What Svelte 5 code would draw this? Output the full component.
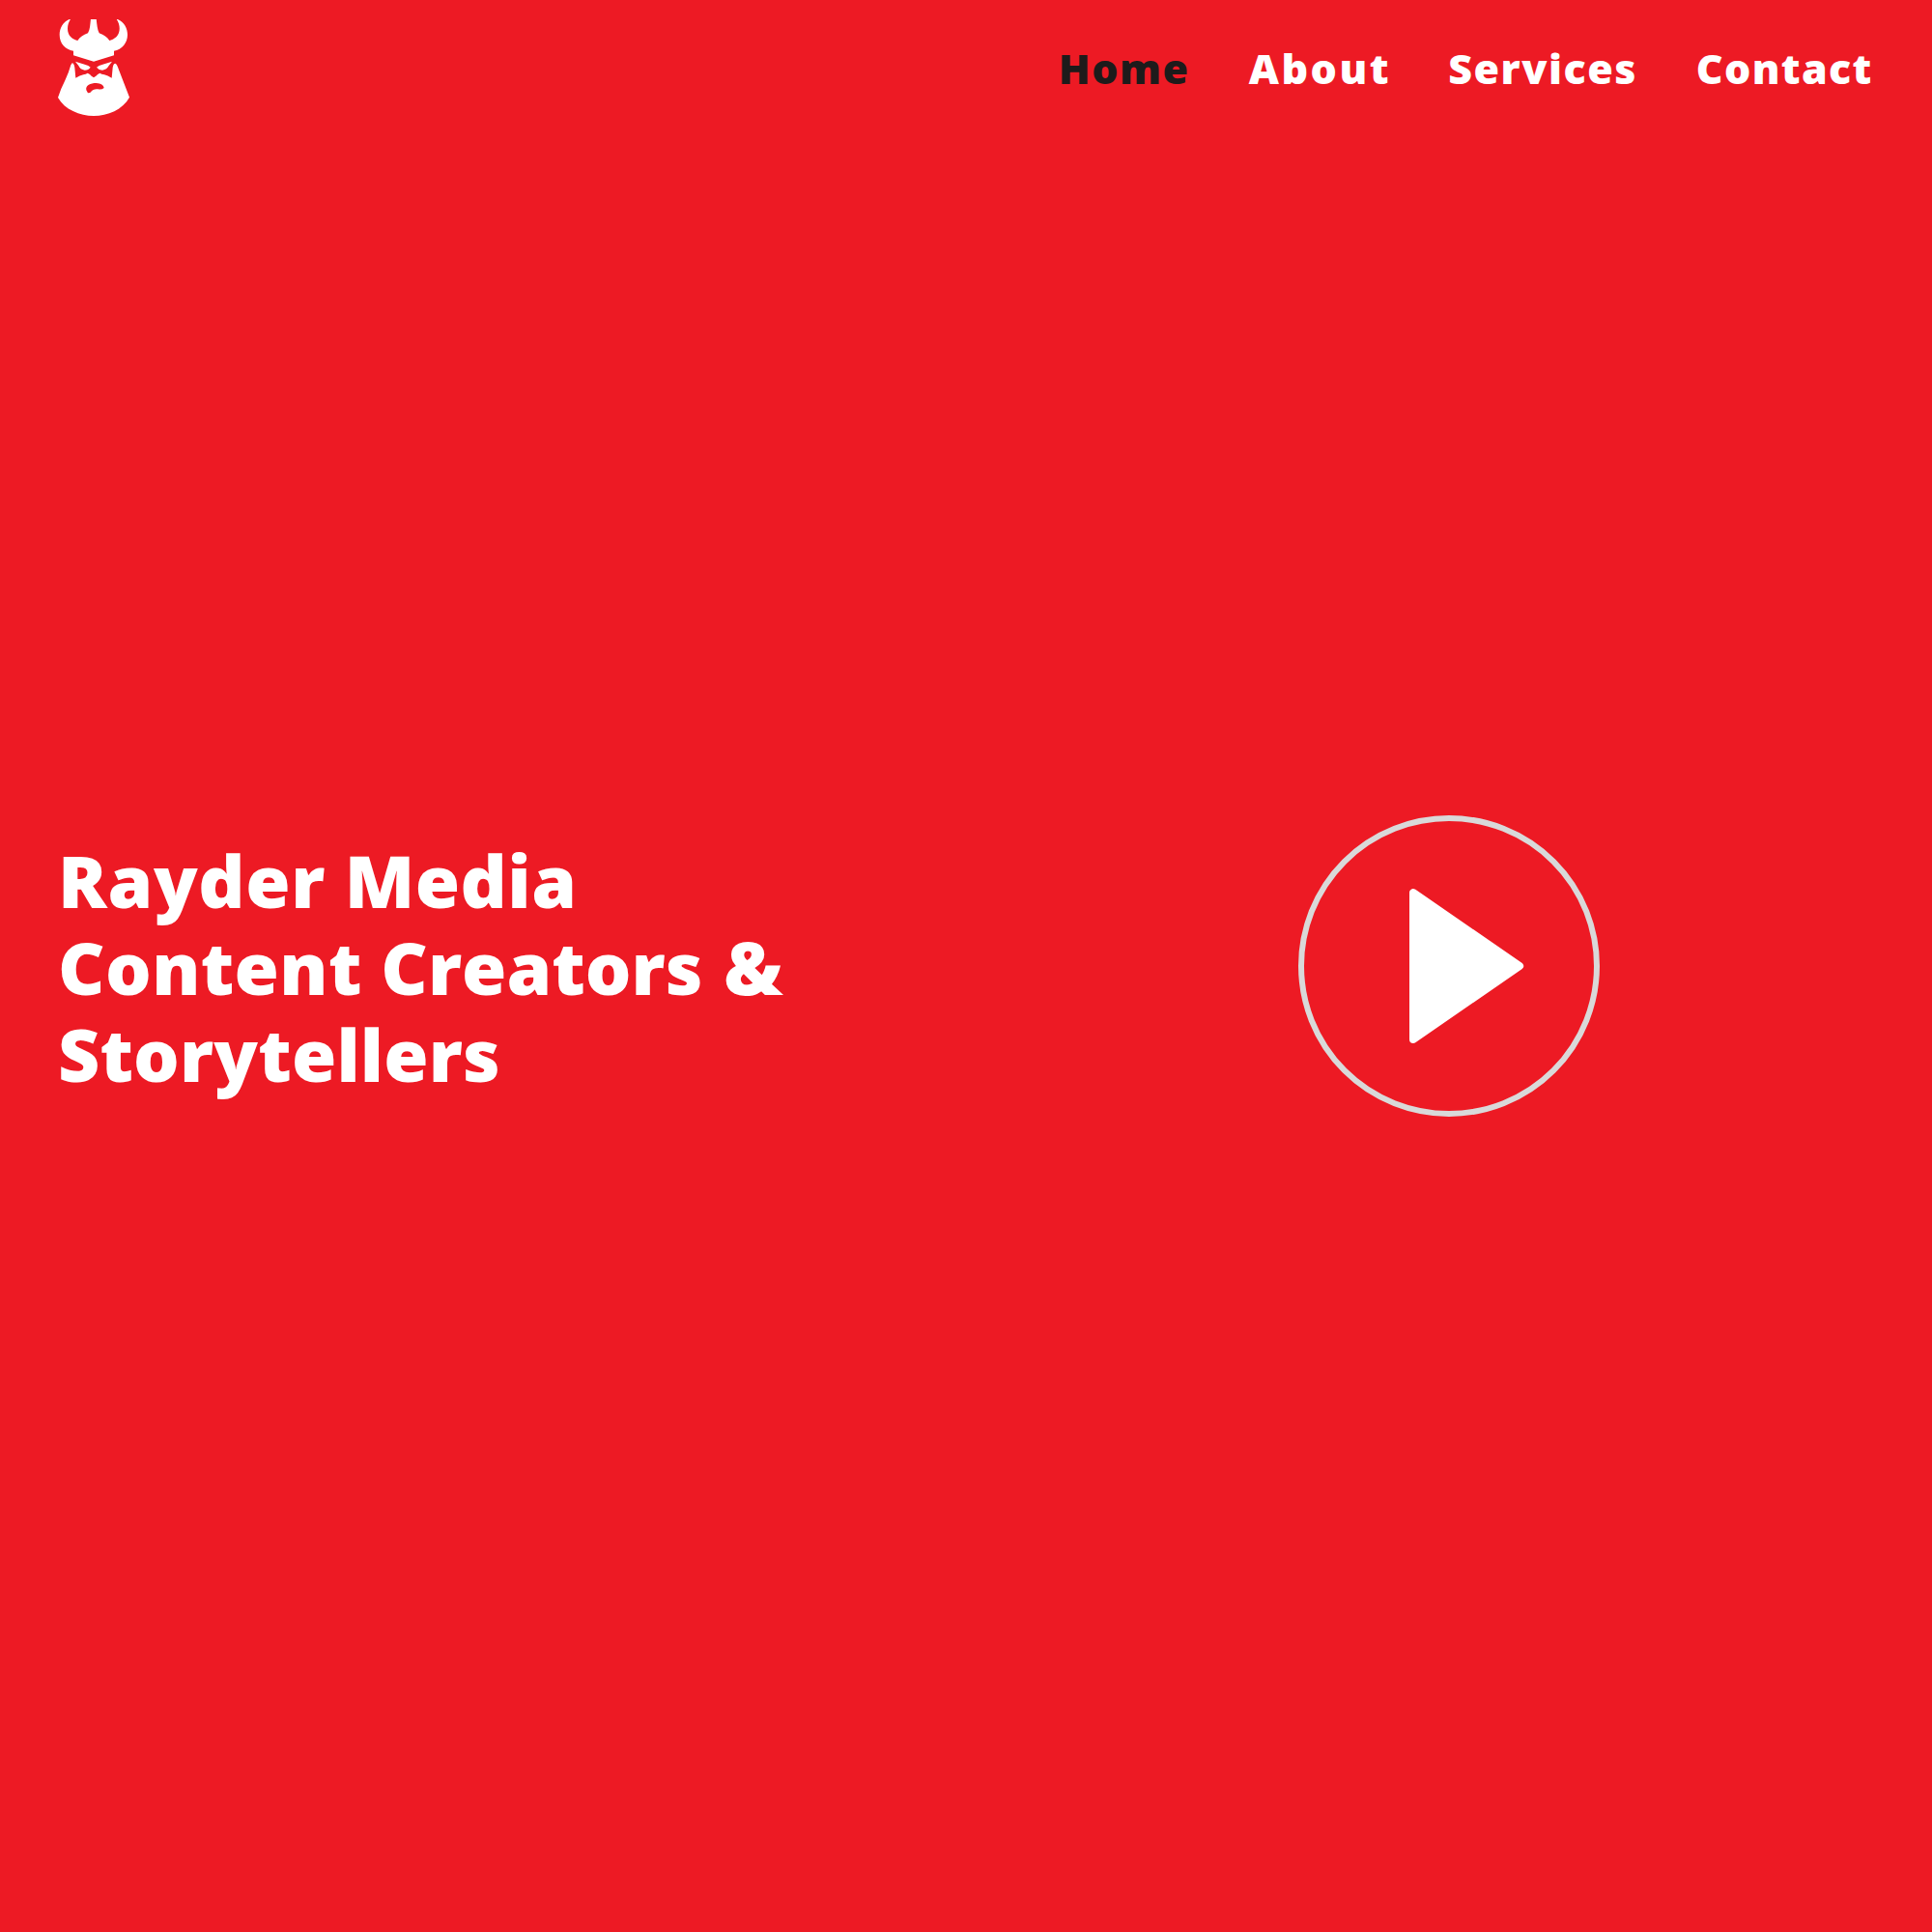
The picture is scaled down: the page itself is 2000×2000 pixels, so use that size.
<script>
  const links = ['Home', 'About', 'Services', 'Contact'];
  const active = 'Home';
</script>

<div class="page">
  <header>
    <a class="logo" href="#home" aria-label="Rayder Media">
      <svg viewBox="30 30 222 300" width="74" height="100">
        <g fill="#fff">
          <!-- horned helmet -->
          <path d="M70 28C47 36 35 56 35 78C35 105 53 124 78 128L78 142L141 161L204 142L204 128C229 124 246 103 246 78C246 55 234 37 211 28C220 41 224 57 219 72C213 87 202 92 190 96C183 86 173 78 158 73C152 61 151 45 149 28L132 28C130 45 130 61 123 73C108 78 98 86 91 96C77 92 65 85 61 68C58 54 62 40 70 28Z" />
          <!-- eyes -->
          <path d="M84 161L113 170Q126 173 131 179Q125 188 113 188Q99 186 94 174Z" />
          <path d="M198 161L169 170Q156 173 150 179Q157 188 168 188Q182 186 188 174Z" />
          <!-- beard -->
          <path d="M74 166Q80 166 82 180L85 212Q98 205 109 202Q117 200 122 197Q130 200 134 206L141 211L148 206Q153 200 160 197Q165 200 174 202Q184 205 197 212L200 180Q202 167 208 167Q213 168 219 187L252 272C232 310 184 330 141 330C98 330 50 310 30 273Q40 243 52 220Q64 194 70 172Z" />
        </g>
        <!-- mouth -->
        <path fill="#ed1a24" d="M118 250C115 235 131 228 149 228Q171 230 173 243Q166 249 155 247Q142 245 136 251Q131 259 123 259Z" />
      </svg>
    </a>
    <nav>
      {#each links as link}
        <a class={link.toLowerCase()} class:active={link === active} href="#{link.toLowerCase()}">{link}</a>
      {/each}
    </nav>
  </header>

  <main>
    <h1>
      <span class="line"><span class="rayder">Rayder</span> <span class="media">Media</span></span>
      <span class="line"><span class="content">Content</span> Creators <span class="amp">&amp;</span></span>
      <span class="line third">Storytellers</span>
    </h1>
    <div class="video">
      <button aria-label="Play video">
        <svg viewBox="0 0 312 312" width="312" height="312">
          <circle cx="156" cy="156" r="153" fill="none" stroke="#d9d9d9" stroke-width="6" />
          <path d="M119 80.1V231.9L229.1 156Z" fill="#fff" stroke="#fff" stroke-width="8" stroke-linejoin="round" />
        </svg>
      </button>
    </div>
  </main>
</div>

<style>
  :global(body) { margin: 0; background: #ed1a24; }
  .page {
    box-sizing: border-box;
    height: 2000px;
    display: flex;
    flex-direction: column;
    background: #ed1a24;
    color: #fff;
    font-family: "Open Sans", "Noto Sans", sans-serif;
    font-weight: 800;
  }
  header {
    height: 140px;
    flex: none;
    padding: 0 60px;
    display: flex;
    align-items: center;
    justify-content: space-between;
  }
  .logo, .logo svg { display: block; }
  .logo svg { filter: blur(0.4px); }
  nav {
    display: grid;
    grid-template-columns: 197px 206.5px 256.6px 184.2px;
    padding-top: 1px;
    font-size: 43px;
    line-height: 60px;
  }
  nav a { color: #fff; text-decoration: none; white-space: nowrap; }
  nav a.active { color: #1d1b1b; }
  .home { letter-spacing: 1.5px; }
  .about { letter-spacing: 2.5px; }
  .services { letter-spacing: 1.5px; }
  .contact { letter-spacing: 1.3px; }
  main {
    flex: 1;
    display: grid;
    grid-template-columns: 1fr 1fr;
    align-items: center;
    padding-bottom: 140px;
  }
  h1 {
    margin: 0;
    padding: 2px 0 0 60px;
    font-size: 75px;
    line-height: 90px;
    font-weight: inherit;
  }
  .line { display: block; white-space: nowrap; }
  .third { letter-spacing: 0.15px; }
  .rayder { letter-spacing: 0.7px; }
  .media { letter-spacing: 0.5px; }
  .content { letter-spacing: 0.35px; }
  .amp { margin-left: 2px; font-size: 77px; line-height: 1; }
  .video { display: flex; justify-content: center; }
  button { padding: 0; border: 0; background: none; }
  button svg { display: block; }
</style>
